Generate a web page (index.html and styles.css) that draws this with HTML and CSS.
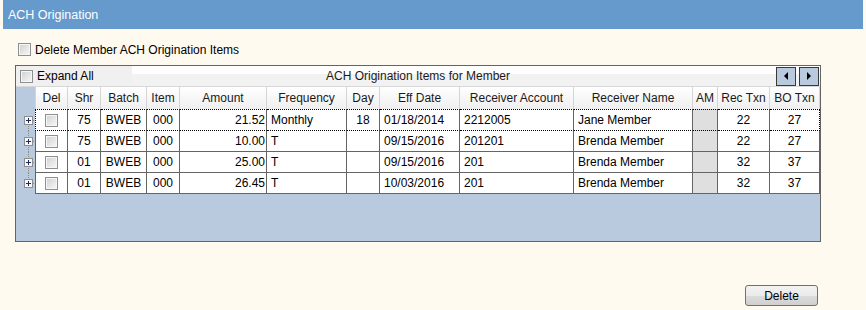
FILE: index.html
```html
<!DOCTYPE html>
<html lang="en">
  <head>
    <meta charset="UTF-8" />
    <title>ACH Origination</title>
    <link rel="stylesheet" href="styles.css">
  </head>
  <body>
    <div class="titlebar">ACH Origination</div>

    <label class="option">
      <span class="check"></span>
      <span>Delete Member ACH Origination Items</span>
    </label>

    <div class="grid">
      <div class="caption">
        <div class="caption-title">ACH Origination Items for Member</div>
        <label class="expand">
          <span class="check"></span>
          <span>Expand All</span>
        </label>
        <div class="nav">
          <button class="nav-btn"><span class="arrow left"></span></button>
          <button class="nav-btn"><span class="arrow right"></span></button>
        </div>
      </div>

      <table class="items">
        <thead>
          <tr>
            <th class="rowhead"></th>
            <th class="c-del first">Del</th>
            <th class="c-shr">Shr</th>
            <th class="c-batch">Batch</th>
            <th class="c-item">Item</th>
            <th class="c-amount">Amount</th>
            <th class="c-freq">Frequency</th>
            <th class="c-day">Day</th>
            <th class="c-date">Eff Date</th>
            <th class="c-acct">Receiver Account</th>
            <th class="c-name">Receiver Name</th>
            <th class="c-am">AM</th>
            <th class="c-rec">Rec Txn</th>
            <th class="c-bo">BO Txn</th>
          </tr>
        </thead>
        <tbody>
          <tr class="current">
            <td class="rowhead"><svg width="19" height="22" viewBox="0 0 19 22"><path d="M8.5 11V22M13 11.5H19" stroke="#8a8a8a" stroke-dasharray="1 1"/><rect x="4.5" y="7.5" width="8" height="8" fill="#f7f7f7" stroke="#8f8f8f"/><path d="M6 11.5h5M8.5 9v5" stroke="#1e2a5a"/></svg></td>
            <td class="first center"><span class="check"></span></td>
            <td class="center">75</td>
            <td class="center">BWEB</td>
            <td class="center">000</td>
            <td class="right">21.52</td>
            <td>Monthly</td>
            <td class="center">18</td>
            <td>01/18/2014</td>
            <td>2212005</td>
            <td>Jane Member</td>
            <td class="am"></td>
            <td class="center">22</td>
            <td class="center last">27</td>
          </tr>
          <tr>
            <td class="rowhead"><svg width="19" height="21" viewBox="0 0 19 21"><path d="M8.5 0V21M13 10.5H19" stroke="#8a8a8a" stroke-dasharray="1 1"/><rect x="4.5" y="6.5" width="8" height="8" fill="#f7f7f7" stroke="#8f8f8f"/><path d="M6 10.5h5M8.5 8v5" stroke="#1e2a5a"/></svg></td>
            <td class="first center"><span class="check"></span></td>
            <td class="center">75</td>
            <td class="center">BWEB</td>
            <td class="center">000</td>
            <td class="right">10.00</td>
            <td>T</td>
            <td></td>
            <td>09/15/2016</td>
            <td>201201</td>
            <td>Brenda Member</td>
            <td class="am"></td>
            <td class="center">22</td>
            <td class="center">27</td>
          </tr>
          <tr>
            <td class="rowhead"><svg width="19" height="21" viewBox="0 0 19 21"><path d="M8.5 0V21M13 10.5H19" stroke="#8a8a8a" stroke-dasharray="1 1"/><rect x="4.5" y="6.5" width="8" height="8" fill="#f7f7f7" stroke="#8f8f8f"/><path d="M6 10.5h5M8.5 8v5" stroke="#1e2a5a"/></svg></td>
            <td class="first center"><span class="check"></span></td>
            <td class="center">01</td>
            <td class="center">BWEB</td>
            <td class="center">000</td>
            <td class="right">25.00</td>
            <td>T</td>
            <td></td>
            <td>09/15/2016</td>
            <td>201</td>
            <td>Brenda Member</td>
            <td class="am"></td>
            <td class="center">32</td>
            <td class="center">37</td>
          </tr>
          <tr>
            <td class="rowhead"><svg width="19" height="21" viewBox="0 0 19 21"><path d="M8.5 0V10M13 10.5H19" stroke="#8a8a8a" stroke-dasharray="1 1"/><rect x="4.5" y="6.5" width="8" height="8" fill="#f7f7f7" stroke="#8f8f8f"/><path d="M6 10.5h5M8.5 8v5" stroke="#1e2a5a"/></svg></td>
            <td class="first center"><span class="check"></span></td>
            <td class="center">01</td>
            <td class="center">BWEB</td>
            <td class="center">000</td>
            <td class="right">26.45</td>
            <td>T</td>
            <td></td>
            <td>10/03/2016</td>
            <td>201</td>
            <td>Brenda Member</td>
            <td class="am"></td>
            <td class="center">32</td>
            <td class="center">37</td>
          </tr>
        </tbody>
      </table>
    </div>

    <button class="delete-btn">Delete</button>
  </body>
</html>
```

FILE: styles.css
```css
:root {
  --cream: #fffaef;
  --title-blue: #6699cc;
  --grid-blue: #b9c9de;
  --grid-line: #646464;
  --head-line: #d5d5d5;
  --text: #000;
}

* {
  margin: 0;
  padding: 0;
  box-sizing: border-box;
}

body {
  background-color: var(--cream);
  color: var(--text);
  font-family: "Liberation Sans", Arial, sans-serif;
  font-size: 12px;
  width: 866px;
  height: 310px;
  overflow: hidden;
}

.titlebar {
  margin: 0 3px;
  height: 29px;
  line-height: 30px;
  padding-left: 5px;
  background-color: var(--title-blue);
  color: #fff;
  font-size: 12.5px;
}

.check {
  display: inline-block;
  width: 13px;
  height: 13px;
  flex: none;
  border: 1px solid #8e8f8f;
  background: linear-gradient(135deg, #d0d0d0 0%, #e6e6e6 55%, #f8f8f8 100%);
  box-shadow: inset 0 0 0 1px #f6f6f6;
}

.option {
  display: flex;
  align-items: center;
  gap: 4px;
  height: 13px;
  margin: 14px 0 0 18px;
}

/* grid box */

.grid {
  width: 806px;
  height: 177px;
  margin: 9px 0 0 15px;
  border: 1px solid var(--grid-line);
  background-color: var(--grid-blue);
}

.caption {
  display: grid;
  grid-template-columns: 116px 1fr auto;
  height: 21px;
  border-bottom: 1px solid #d8d8d8;
  background: linear-gradient(#ffffff 0%, #ffffff 40%, #f2f2f2 41%, #f2f2f2 100%);
}

.caption-title {
  grid-row: 1;
  grid-column: 1 / -1;
  text-align: center;
  line-height: 20px;
  color: #1a1a1a;
}

.expand {
  grid-row: 1;
  grid-column: 1;
  display: flex;
  align-items: center;
  gap: 4px;
  padding-left: 4px;
  background-color: #f0f0f0;
}

.nav {
  grid-row: 1;
  grid-column: 3;
  display: flex;
  align-items: center;
  gap: 3px;
  padding-right: 1px;
}

.nav-btn {
  display: flex;
  align-items: center;
  justify-content: center;
  width: 20px;
  height: 19px;
  border: 1px solid #3a3a3a;
  background-color: var(--grid-blue);
}

.arrow {
  width: 0;
  height: 0;
  border-top: 4px solid transparent;
  border-bottom: 4px solid transparent;
}

.arrow.left {
  border-right: 4px solid #000;
}

.arrow.right {
  border-left: 4px solid #000;
}

/* table */

.items {
  width: 804px;
  table-layout: fixed;
  border-collapse: separate;
  border-spacing: 0;
}

.items th,
.items td {
  padding: 0;
  white-space: nowrap;
  overflow: hidden;
}

.items th {
  height: 22px;
  font-weight: normal;
  text-align: center;
  color: #1a1a1a;
  border-right: 1px solid var(--head-line);
  background: linear-gradient(#ffffff 0%, #f7f7f7 50%, #efefef 100%);
}

.items th.first {
  border-left: 1px solid var(--head-line);
}

.items th.rowhead,
.items td.rowhead {
  width: 19px;
  background: none;
  border: none;
  line-height: 0;
}

.c-del { width: 33px; }
.c-shr { width: 33px; }
.c-batch { width: 46px; }
.c-item { width: 33px; }
.c-amount { width: 87px; }
.c-freq { width: 80px; }
.c-day { width: 33px; }
.c-date { width: 80px; }
.c-acct { width: 114px; }
.c-name { width: 119px; }
.c-am { width: 25px; }
.c-rec { width: 52px; }
.c-bo { width: 50px; }

.items td {
  height: 21px;
  padding: 0 3px 0 4px;
  background-color: #fff;
  border-right: 1px solid var(--grid-line);
  border-bottom: 1px solid var(--grid-line);
}

.items td.first {
  border-left: 1px solid var(--grid-line);
  line-height: 0;
}

.items td.center {
  text-align: center;
  padding: 0;
}

.items td.right {
  text-align: right;
  padding: 0 1px 0 0;
}

.items td.am {
  background-color: #dfdfdf;
}

.current td {
  height: 22px;
  border-top: 1px dotted #000;
  border-bottom: 1px dotted #000;
}

.current td.first {
  border-left: 1px dotted #000;
}

.current td.last {
  border-right: 1px dotted #000;
}

.items .current td.rowhead {
  border: none;
}

/* footer button */

.delete-btn {
  display: block;
  width: 73px;
  height: 21px;
  margin: 43px 0 0 745px;
  border: 1px solid #707070;
  border-radius: 3px;
  background: linear-gradient(#f2f2f2 0%, #ebebeb 50%, #dddddd 51%, #cfcfcf 100%);
  font-family: "Liberation Sans", Arial, sans-serif;
  font-size: 12px;
  color: #000;
}
```
